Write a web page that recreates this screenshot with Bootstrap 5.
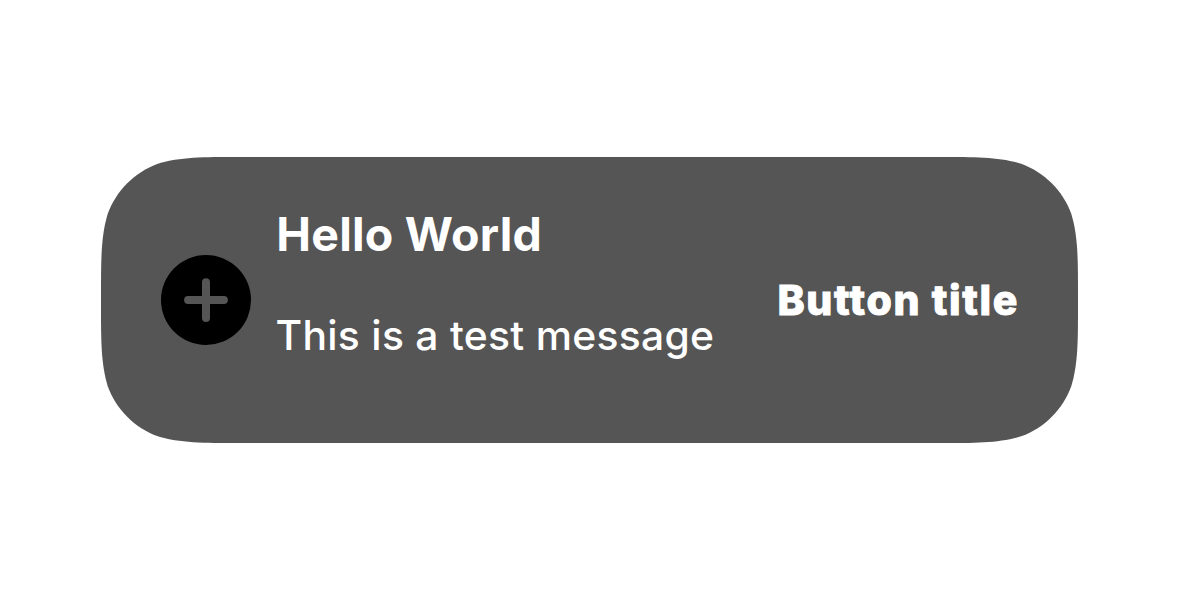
<!DOCTYPE html>
<html lang="en">
<head>
<meta charset="utf-8">
<meta name="viewport" content="width=device-width, initial-scale=1">
<title>Snackbar</title>
<link href="https://cdn.jsdelivr.net/npm/bootstrap@5.3.0/dist/css/bootstrap.min.css" rel="stylesheet">
<style>
  body { font-family: Inter, "Liberation Sans", sans-serif; background: #fff; }
  .snackbar {
    width: 977px; height: 286px; padding: 0 60px; background: #555;
    /* continuous (squircle) corners */
    clip-path: path("M137.58 0H839.42C875 0 898 0 920.17 6.74C943.45 15.22 961.78 33.55 970.26 56.83C977 79 977 102 977 137.58V148.42C977 184 977 207 970.26 229.17C961.78 252.45 943.45 270.78 920.17 279.26C898 286 875 286 839.42 286H137.58C102 286 79 286 56.83 279.26C33.55 270.78 15.22 252.45 6.74 229.17C0 207 0 184 0 148.42V137.58C0 102 0 79 6.74 56.83C15.22 33.55 33.55 15.22 56.83 6.74C79 0 102 0 137.58 0Z");
  }
  .snack-copy { margin-left: 24.5px; padding-bottom: 32px; gap: 43px; }
  .snack-title { font-size: 46.5px; line-height: 58px; font-weight: 650; letter-spacing: .25px; padding-left: .7px; }
  .snack-text { font-size: 40.8px; line-height: 58px; font-weight: 450; letter-spacing: .3px; }
  .snack-action { font-size: 41px; line-height: 50px; font-weight: 800; letter-spacing: 1.6px; margin-right: -1px; -webkit-text-stroke: .9px #fff; }
</style>
</head>
<body>
<main class="vh-100 d-flex align-items-center justify-content-center">
  <div class="snackbar d-flex align-items-center text-white" role="status">
    <svg class="flex-shrink-0" width="90" height="90" viewBox="0 0 90 90" aria-hidden="true">
      <circle cx="45" cy="45" r="45" fill="#000"/>
      <path d="M45 27.2V63M27.1 45.1H62.9" stroke="#555" stroke-width="8" stroke-linecap="round" fill="none"/>
    </svg>
    <div class="snack-copy d-flex flex-column text-nowrap">
      <h1 class="snack-title m-0">Hello World</h1>
      <p class="snack-text m-0">This is a test message</p>
    </div>
    <button type="button" class="snack-action btn btn-link p-0 border-0 text-white text-decoration-none text-nowrap ms-auto">Button title</button>
  </div>
</main>
<script src="https://cdn.jsdelivr.net/npm/bootstrap@5.3.0/dist/js/bootstrap.bundle.min.js"></script>
</body>
</html>
